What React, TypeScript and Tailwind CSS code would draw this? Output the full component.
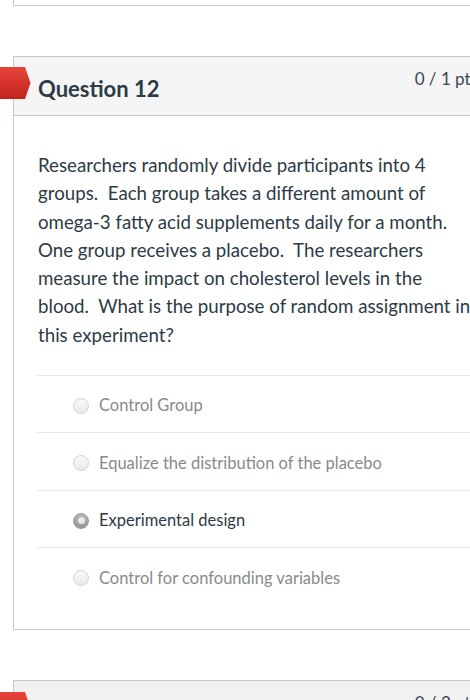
import React from 'react';

const font = { fontFamily: 'Lato, "Open Sans", "Liberation Sans", sans-serif' };

interface Answer {
  label: string;
  selected?: boolean;
}

const answers: Answer[] = [
  { label: 'Control Group' },
  { label: 'Equalize the distribution of the placebo' },
  { label: 'Experimental design', selected: true },
  { label: 'Control for confounding variables' }
];

const questionLines = [
  'Researchers randomly divide participants into 4',
  'groups.\u00a0 Each group takes a different amount of',
  'omega-3 fatty acid supplements daily for a month.',
  'One group receives a placebo.\u00a0 The researchers',
  'measure the impact on cholesterol levels in the',
  'blood.\u00a0 What is the purpose of random assignment in',
  'this experiment?'
];

const Flag: React.FC = () => (
  <svg width="31" height="32" viewBox="0 0 31 32" className="block">
    <defs>
      <linearGradient id="flagRed" x1="0" y1="0" x2="0" y2="1">
        <stop offset="0" stopColor="#e6443b" />
        <stop offset="1" stopColor="#c2231d" />
      </linearGradient>
    </defs>
    <polygon points="0,0 25,0 30.5,16 25,32 0,32" fill="url(#flagRed)" />
  </svg>
);

const Radio: React.FC<{ selected?: boolean }> = ({ selected }) =>
  selected ? (
    <span className="flex h-4 w-4 shrink-0 items-center justify-center rounded-full border border-[#9a9a9a] bg-gradient-to-b from-[#b5b5b5] to-[#979797]">
      <span className="h-[7px] w-[7px] rounded-full bg-[#e9e9e9]" />
    </span>
  ) : (
    <span className="block h-4 w-4 shrink-0 rounded-full border border-[#d3d3d3] bg-gradient-to-b from-[#fafafa] to-[#e9e9e9]" />
  );

const App: React.FC = () => {
  return (
    <div className="h-[700px] w-full overflow-hidden bg-white" style={font}>
      {/* end of previous question */}
      <div className="ml-[13px] h-[6px] w-[480px] border-b border-l border-[#c4c9cc]" />

      {/* question 12 */}
      <div className="mt-[50px] ml-[13px] w-[480px] border border-[#c4c9cc]">
        <div className="relative flex h-[59px] items-start justify-between border-b border-[#c4c9cc] bg-[#f5f5f5] pl-[24px] pr-[14px]">
          <div className="absolute left-[-14px] top-[10px]">
            <Flag />
          </div>
          <h2 className="mt-[18px] text-[22px] font-bold leading-[27px] text-[#2d3b45]">Question 12</h2>
          <span className="mt-[11px] whitespace-nowrap text-[17px] leading-[21px] text-[#3b4650]">0 / 1 pts</span>
        </div>

        <div className="pt-[35px] pb-[24px]">
          <p className="ml-[24px] whitespace-nowrap text-[18.7px] leading-[28.3px] text-[#2d3b45]">
            {questionLines.map((line) => (
              <span key={line} className="block">
                {line}
              </span>
            ))}
          </p>

          <div className="mt-[26px] ml-[23px]">
            {answers.map((a) => (
              <div
                key={a.label}
                className="flex h-[57.4px] items-center gap-[10px] border-t border-[#e8e8e8] pt-[3px] pl-[36px]"
              >
                <Radio selected={a.selected} />
                <span className={`text-[16.5px] ${a.selected ? 'text-[#2d3b45]' : 'text-[#8a8a8a]'}`}>{a.label}</span>
              </div>
            ))}
          </div>
        </div>
      </div>

      {/* next question */}
      <div className="mt-[50px] ml-[13px] w-[480px] border border-[#c4c9cc]">
        <div className="relative flex h-[59px] items-start justify-between bg-gradient-to-b from-[#f0f0f0] to-[#f6f6f6] pl-[24px] pr-[14px]">
          <div className="absolute left-[-14px] top-[11px]">
            <Flag />
          </div>
          <h2 className="mt-[18px] text-[22px] font-bold leading-[27px] text-[#2d3b45]">Question 13</h2>
          <span className="mt-[11px] whitespace-nowrap text-[17px] leading-[21px] text-[#3b4650]">0 / 2 pts</span>
        </div>
      </div>
    </div>
  );
};

export default App;
